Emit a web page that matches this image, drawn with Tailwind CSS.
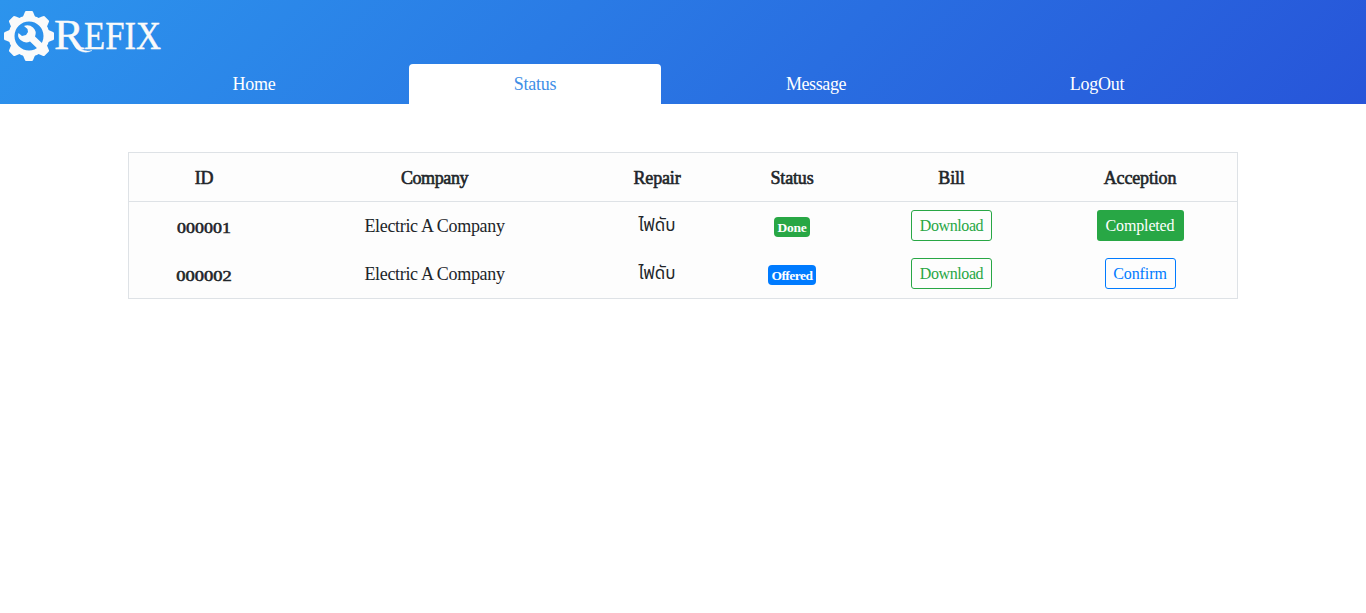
<!DOCTYPE html>
<html lang="en">
<head>
<meta charset="utf-8">
<title>Refix</title>
<script src="https://cdn.jsdelivr.net/npm/@tailwindcss/browser@4"></script>
</head>
<body class="min-h-screen bg-white font-['Liberation_Serif','Noto_Sans_Thai',serif] text-[18px] leading-6 text-[#212529]">
<header class="flex h-[104px] flex-col justify-between bg-[linear-gradient(135deg,#2c94ed_0%,#2755d9_100%)]">
  <svg class="block h-16 w-[200px]" viewBox="0 0 200 64" fill="#fafafa">
    <g transform="translate(29 36)">
      <path id="t" d="M-7-17L-4.500-23Q-4-25-3-25H3Q4-25 4.500-23L7-17Z"/><use href="#t" transform="rotate(45)"/><use href="#t" transform="rotate(90)"/><use href="#t" transform="rotate(135)"/><use href="#t" transform="rotate(180)"/><use href="#t" transform="rotate(225)"/><use href="#t" transform="rotate(270)"/><use href="#t" transform="rotate(315)"/>
      <circle r="17.500" fill="none" stroke="#fafafa" stroke-width="6"/>
      <path d="M-5-10Q0-12 4-8.500Q8-5 6 0.500L16 10L11 15L1 5.500Q-4 8-8.500 4Q-12 1-10.500-3L-7 0L-3-1L-1-4L-1.500-7Z"/>
    </g>
    <g stroke="#fafafa" stroke-width="0.4">
    <text x="54" y="48.500" font-family="Liberation Serif" font-size="43" textLength="30" lengthAdjust="spacingAndGlyphs">R</text>
    <path d="M76 44Q82 53 92 50.500Q86 54 79 50.500Q75 48 73 43Z"/>
    <text x="84" y="48.500" font-family="Liberation Serif" font-size="39.500" textLength="77" lengthAdjust="spacingAndGlyphs">EFIX</text>
    </g>
  </svg>
  <nav class="ml-32 flex gap-[29px] text-center tracking-[-0.25px] text-white">
    <a class="w-[252px] py-2">Home</a>
    <a class="w-[252px] rounded-t bg-white py-2 text-[#3f8fe6]">Status</a>
    <a class="w-[252px] py-2 tracking-[-0.4px]">Message</a>
    <a class="w-[252px] py-2">LogOut</a>
  </nav>
</header>
<main class="mx-auto mt-12 w-[1110px]">
  <table class="w-full table-fixed border-separate border-spacing-0 border border-[#dee2e6] bg-[#fdfdfd] text-center">
    <colgroup><col class="w-[150px]"><col class="w-[311px]"><col class="w-[134px]"><col class="w-[136px]"><col class="w-[183px]"><col class="w-[194px]"></colgroup>
    <thead>
      <tr class="h-[49px] tracking-[-0.15px] *:border-b *:border-[#dee2e6] *:p-0 *:pt-px *:font-normal *:[-webkit-text-stroke:0.6px_#212529]"><th>ID</th><th class="tracking-[-0.4px]">Company</th><th>Repair</th><th>Status</th><th>Bill</th><th>Acception</th></tr>
    </thead>
    <tbody>
      <tr class="h-12 *:p-0">
        <th><span class="relative top-px inline-block scale-x-[1.28] text-sm font-normal [-webkit-text-stroke:0.5px_#212529]">000001</span></th>
        <td class="tracking-[-0.32px]">Electric A Company</td>
        <td class="text-[17px]">ไฟดับ</td>
        <td><div class="mx-auto mt-0.5 h-5 w-9 rounded bg-[#28a745] text-[13.5px] leading-[21px] font-bold tracking-[-0.3px] text-white">Done</div></td>
        <td><div class="mx-auto mb-px h-[31px] w-[81px] rounded-[3px] border border-[#28a745] text-base leading-[29px] tracking-[-0.4px] text-[#28a745]">Download</div></td>
        <td><div class="mx-auto mb-px h-[31px] w-[87px] rounded-[3px] bg-[#28a745] text-base leading-[31px] tracking-[-0.15px] text-white">Completed</div></td>
      </tr>
      <tr class="h-12 *:p-0">
        <th><span class="relative top-px inline-block scale-x-[1.32] text-sm font-normal [-webkit-text-stroke:0.5px_#212529]">000002</span></th>
        <td class="tracking-[-0.32px]">Electric A Company</td>
        <td class="text-[17px]">ไฟดับ</td>
        <td><div class="mx-auto mt-0.5 h-5 w-12 rounded bg-[#007bff] text-[13.5px] leading-[21px] font-bold tracking-[-0.5px] text-white">Offered</div></td>
        <td><div class="mx-auto mb-px h-[31px] w-[81px] rounded-[3px] border border-[#28a745] text-base leading-[29px] tracking-[-0.4px] text-[#28a745]">Download</div></td>
        <td><div class="mx-auto mb-px h-[31px] w-[71px] rounded-[3px] border border-[#007bff] text-base leading-[29px] tracking-[-0.1px] text-[#007bff]">Confirm</div></td>
      </tr>
    </tbody>
  </table>
</main>
</body>
</html>
